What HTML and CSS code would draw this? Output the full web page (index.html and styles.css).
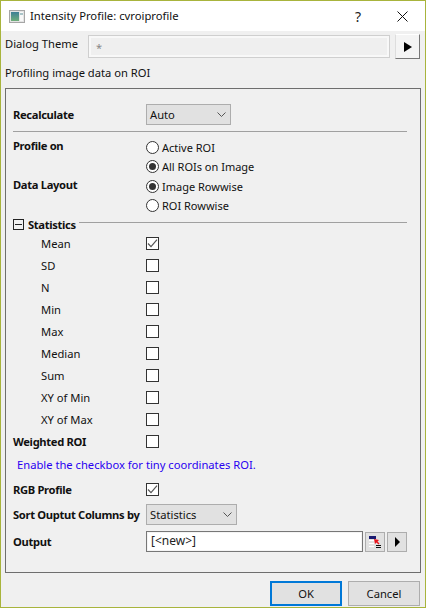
FILE: index.html
```html
<!DOCTYPE html>
<html lang="en">
<head>
<meta charset="utf-8">
<title>Intensity Profile: cvroiprofile</title>
<link rel="stylesheet" href="styles.css">
</head>
<body>
<div class="dialog">
  <header class="titlebar">
    <svg class="appicon" width="16" height="13" viewBox="0 0 16 13"><defs><linearGradient id="g" x1="0" y1="0" x2="0" y2="1"><stop offset="0" stop-color="#3f7f96"/><stop offset="1" stop-color="#6fae7a"/></linearGradient></defs><rect x=".5" y=".5" width="15" height="12" fill="#e4e4e4" stroke="#a6a6a6"/><rect x="2" y="2" width="8" height="9" fill="url(#g)"/><rect x="11" y="2" width="3" height="9" fill="#f8f8f8"/><rect x="11" y="3" width="3" height="2" fill="#a9c4c8"/></svg>
    <span class="title">Intensity Profile: cvroiprofile</span>
    <span class="help">?</span>
    <svg class="close" width="11" height="11" viewBox="0 0 11 11"><path d="M.5.5l10 10M10.5.5l-10 10" stroke="#111" fill="none"/></svg>
  </header>
  <div class="theme">
    <span class="theme-label">Dialog Theme</span>
    <div class="theme-input">*</div>
    <button class="theme-btn"><span class="tri"></span></button>
  </div>
  <div class="desc">Profiling image data on ROI</div>
  <section class="group">
    <div class="row r-recalc"><b class="lbl">Recalculate</b><div class="select s-auto"><span>Auto</span><svg class="chev" width="9" height="5" viewBox="0 0 9 5"><path d="M.5.5l4 4 4-4" fill="none" stroke="#555"/></svg></div></div>
    <hr class="sep">
    <div class="radios r-profile"><b class="lbl">Profile on</b><div class="radio-list">
      <div class="radio"><i class="dot"></i>Active ROI</div>
      <div class="radio"><i class="dot on"></i>All ROIs on Image</div>
    </div></div>
    <div class="radios r-layout"><b class="lbl">Data Layout</b><div class="radio-list">
      <div class="radio"><i class="dot on"></i>Image Rowwise</div>
      <div class="radio"><i class="dot"></i>ROI Rowwise</div>
    </div></div>
    <div class="stat-head"><i class="minus"></i><b>Statistics</b><span class="stat-line"></span></div>
    <div class="stats">
      <div class="row stat"><span class="lbl sub">Mean</span><i class="cb"><svg width="13" height="13" viewBox="0 0 13 13"><path d="M2 6.5l3 3.2 6-7" fill="none" stroke="#555" stroke-width="1.2"/></svg></i></div>
      <div class="row stat"><span class="lbl sub">SD</span><i class="cb"></i></div>
      <div class="row stat"><span class="lbl sub">N</span><i class="cb"></i></div>
      <div class="row stat"><span class="lbl sub">Min</span><i class="cb"></i></div>
      <div class="row stat"><span class="lbl sub">Max</span><i class="cb"></i></div>
      <div class="row stat"><span class="lbl sub">Median</span><i class="cb"></i></div>
      <div class="row stat"><span class="lbl sub">Sum</span><i class="cb"></i></div>
      <div class="row stat"><span class="lbl sub">XY of Min</span><i class="cb"></i></div>
      <div class="row stat"><span class="lbl sub">XY of Max</span><i class="cb"></i></div>
      <div class="row stat"><b class="lbl">Weighted ROI</b><i class="cb"></i></div>
    </div>
    <div class="note">Enable the checkbox for tiny coordinates ROI.</div>
    <div class="row r-rgb"><b class="lbl">RGB Profile</b><i class="cb"><svg width="13" height="13" viewBox="0 0 13 13"><path d="M2 6.5l3 3.2 6-7" fill="none" stroke="#555" stroke-width="1.2"/></svg></i></div>
    <div class="row r-sort"><b class="lbl">Sort Ouptut Columns by</b><div class="select s-stat"><span>Statistics</span><svg class="chev" width="9" height="5" viewBox="0 0 9 5"><path d="M.5.5l4 4 4-4" fill="none" stroke="#555"/></svg></div></div>
    <div class="row r-output"><b class="lbl">Output</b>
      <div class="out-input">[&lt;new&gt;]</div>
      <button class="small-btn"><svg width="14" height="14" viewBox="0 0 14 14"><rect x="1" y="1" width="7" height="3" fill="#1a1a70"/><path d="M1 5.5h6M1 8.500h5M1 11.500h5" stroke="#fff"/><path d="M8 10.500h5M8 12.500h5" stroke="#111"/><path d="M6 4l5 1-1.500 1.500 2 2-1 1-2-2L7 9z" fill="#e8141c"/></svg></button>
      <button class="small-btn arrow"><span class="tri small"></span></button>
    </div>
  </section>
  <footer class="actions">
    <button class="btn default">OK</button>
    <button class="btn">Cancel</button>
  </footer>
</div>
</body>
</html>
```
FILE: styles.css
```css
* { box-sizing: border-box; }
html, body { margin: 0; padding: 0; }
body {
  width: 426px; height: 608px; overflow: hidden;
  font-family: "Noto Sans", "Open Sans", sans-serif;
  font-size: 11.2px; color: #111;
}
.dialog {
  width: 426px; height: 608px;
  background: #f0f0f0;
  border: 1px solid #a8b43c;
  display: flex; flex-direction: column;
}
.titlebar {
  height: 30px; background: #fff; flex: none;
  display: flex; align-items: center;
  padding-left: 8px;
}
.appicon { flex: none; }
.title { margin-left: 5px; margin-top: -2px; font-size: 11.25px; flex: 1; color: #111; }
.help { font-size: 14px; width: 11px; margin-right: 31px; color: #222; }
.close { margin-right: 17px; }
.theme {
  display: flex; align-items: center; height: 25px; margin-top: 3px;
  padding-left: 4px; flex: none;
}
.theme-label { width: 83px; margin-top: -7px; }
.theme-input {
  width: 302px; height: 23px; background: #efefef;
  border: 3px solid #f8f8f8; outline: 1px solid #cfcfcf; outline-offset: -1px;
  color: #888; padding-left: 5px; line-height: 20px; font-size: 11px;
}
.theme-btn {
  width: 25px; height: 25px; margin-left: 5px; padding: 0;
  background: #f4f4f4;
  border: 1px solid; border-color: #fff #777 #777 #ddd;
  display: flex; align-items: center; justify-content: center;
}
.tri {
  display: block; width: 0; height: 0;
  border-left: 8px solid #000;
  border-top: 5px solid transparent; border-bottom: 5px solid transparent;
}
.tri.small { border-left-width: 5px; border-top-width: 5px; border-bottom-width: 5px; }
.desc { height: 23px; padding-left: 4px; line-height: 22px; margin-top: 3px; flex: none; }
.group {
  margin: 3px 0 0 4px; width: 416px; height: 485px; flex: none;
  border: 1px solid #6e6e6e; padding: 0 13px 0 7px;
}
.row { display: flex; align-items: center; }
.lbl { width: 133px; flex: none; }
b { font-weight: 700; letter-spacing: -.33px; }
.r-recalc { height: 21px; margin-top: 15px; }
.select {
  height: 21px; background: #e1e1e1; border: 1px solid #adadad;
  display: flex; align-items: center; justify-content: space-between;
  padding: 0 4px 0 3px;
}
.s-auto { width: 85px; }
.s-stat { width: 91px; }
.sep { margin: 6px 0 0; border: 0; border-top: 1px solid #a0a0a0; height: 1px; }
.radios { display: flex; }
.r-profile { margin-top: 6px; }
.r-layout { margin-top: 1px; }
.radios .lbl { line-height: 16px; }
.radio-list { display: flex; flex-direction: column; font-size: 11px; }
.radio { display: flex; align-items: center; height: 19px; }
.dot {
  width: 13px; height: 13px; border: 1px solid #333; border-radius: 50%;
  background: #fff; margin-right: 3px; flex: none; position: relative;
  display: flex; align-items: center; justify-content: center;
}
.dot.on::after { content: ""; width: 7px; height: 7px; border-radius: 50%; background: #333; }
.stat-head { display: flex; align-items: center; height: 18px; margin-top: 0; }
.minus {
  width: 11px; height: 11px; border: 1px solid #222; margin-right: 4px;
  display: flex; align-items: center; justify-content: center; flex: none;
}
.minus::after { content: ""; width: 7px; height: 1px; background: #222; }
.stat-line { flex: 1; height: 1px; background: #a0a0a0; margin-left: 3px; margin-top: -3px; }
.stats { margin-top: -1px; }
.stat { height: 22px; }
.sub { padding-left: 28px; }
.cb {
  width: 13px; height: 13px; border: 1px solid #333; background: #fff;
  margin-left: 0; flex: none; display: block;
}
.cb svg { display: block; margin: -1px; }
.note { color: #2800f0; height: 24px; line-height: 24px; padding-left: 4px; margin-top: 1px; }
.r-rgb { height: 24px; }
.r-sort { height: 25px; margin-top: 1px; }
.r-output { height: 23px; margin-top: 3px; }
.out-input {
  width: 217px; height: 21px; background: #fff; border: 1px solid #777;
  box-shadow: inset 0 0 0 1px #f4f4f4; padding-left: 4px; line-height: 18px; color: #222; flex: none;
  font-size: 12px;
}
.small-btn {
  width: 20px; height: 20px; padding: 0; margin-left: 2px; background: #e1e1e1;
  border: 1px solid #adadad; display: flex; align-items: center; justify-content: center; flex: none;
}
.arrow { margin-left: 2px; }
.actions {
  display: flex; justify-content: flex-end; gap: 6px; padding-right: 5px; margin-top: 8px; flex: none;
}
.btn {
  width: 72px; height: 25px; background: #e1e1e1; border: 1px solid #adadad;
  font: inherit; color: #111; padding: 0;
}
.btn.default { border: 2px solid #0078d7; }
```
